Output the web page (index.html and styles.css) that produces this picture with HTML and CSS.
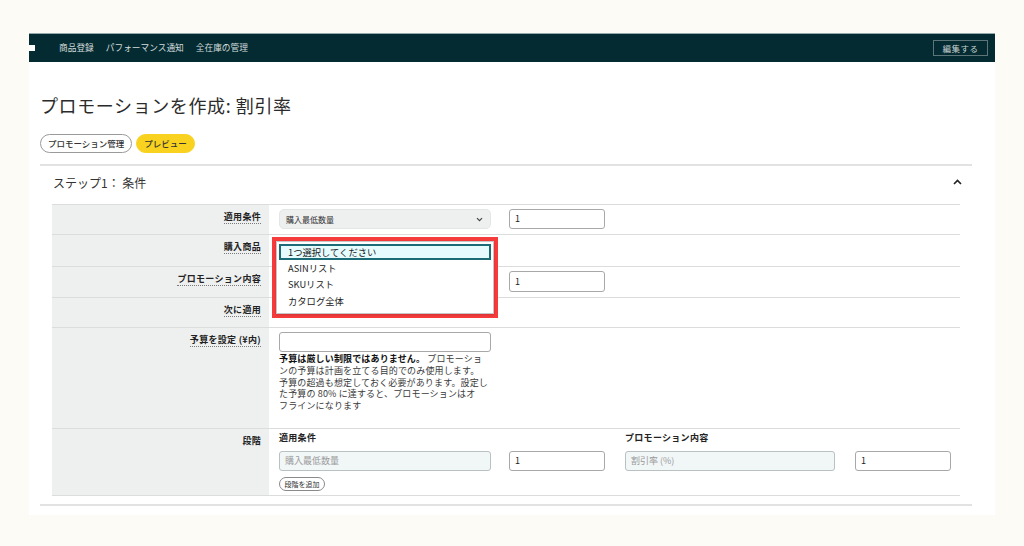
FILE: index.html
```html
<!DOCTYPE html>
<html lang="ja">
<head>
<meta charset="utf-8">
<title>プロモーションを作成: 割引率</title>
<link rel="stylesheet" href="styles.css">
</head>
<body>
<div class="page">
  <nav class="topnav">
    <span class="nav-mark"></span>
    <span class="nav-item">商品登録</span>
    <span class="nav-item">パフォーマンス通知</span>
    <span class="nav-item">全在庫の管理</span>
    <span class="nav-btn">編集する</span>
  </nav>
  <main class="content">
    <h1 class="title">プロモーションを作成: 割引率</h1>
    <div class="pills">
      <span class="pill">プロモーション管理</span>
      <span class="pill pill-yellow">プレビュー</span>
    </div>
    <section class="step">
      <div class="step-head">
        <span>ステップ1： 条件</span>
        <svg class="chev-up" width="9" height="6" viewBox="0 0 9 6"><path d="M1 5 L4.5 1.5 L8 5" fill="none" stroke="#222" stroke-width="1.6"/></svg>
      </div>
      <div class="table">
        <div class="row r1">
          <div class="label"><span>適用条件</span></div>
          <div class="value">
            <div class="select"><span>購入最低数量</span><svg width="7" height="5" viewBox="0 0 7 5"><path d="M1 1.2 L3.5 3.7 L6 1.2" fill="none" stroke="#444" stroke-width="1.2"/></svg></div>
            <div class="input">1</div>
          </div>
        </div>
        <div class="row r2">
          <div class="label"><span>購入商品</span></div>
          <div class="value"></div>
        </div>
        <div class="row r3">
          <div class="label"><span>プロモーション内容</span></div>
          <div class="value">
            <div class="blank"></div>
            <div class="input tall">1</div>
          </div>
        </div>
        <div class="row r4">
          <div class="label"><span>次に適用</span></div>
          <div class="value"></div>
        </div>
        <div class="row r5">
          <div class="label"><span>予算を設定 (¥内)</span></div>
          <div class="value column">
            <div class="input wide"></div>
            <p class="help"><b>予算は厳しい制限ではありません。</b> プロモーショ<br>ンの予算は計画を立てる目的でのみ使用します。<br>予算の超過も想定しておく必要があります。設定し<br>た予算の 80% に達すると、プロモーションはオ<br>フラインになります</p>
          </div>
        </div>
        <div class="row r6">
          <div class="label"><span class="plain">段階</span></div>
          <div class="value tiers">
            <div class="tier-head">適用条件</div>
            <div class="tier-head"></div>
            <div class="tier-head">プロモーション内容</div>
            <div class="tier-head"></div>
            <div class="input wide ph">購入最低数量</div>
            <div class="input">1</div>
            <div class="input wide2 ph">割引率 (%)</div>
            <div class="input">1</div>
            <div class="add-btn">段階を追加</div>
          </div>
        </div>
        <div class="popup">
          <div class="listbox">
            <div class="opt selected">1つ選択してください</div>
            <div class="opt">ASINリスト</div>
            <div class="opt">SKUリスト</div>
            <div class="opt">カタログ全体</div>
          </div>
        </div>
      </div>
    </section>
  </main>
</div>
</body>
</html>
```
FILE: styles.css
```css
* { box-sizing: border-box; margin: 0; padding: 0; }
body {
  background: #fdfbf5;
  font-family: "Noto Sans CJK JP", "Noto Sans", sans-serif;
  color: #333;
}
.page {
  margin: 33px 0 0 29px;
  width: 966px;
  height: 482px;
  background: #fff;
}
.topnav {
  height: 29px;
  background: #032b31;
  border-top: 1px solid #93a9ac;
  display: flex;
  align-items: center;
  color: #d3dcdc;
  font-size: 8.7px;
}
.nav-mark {
  width: 6px;
  height: 6px;
  background: #fff;
  margin-right: 24px;
}
.nav-item { margin-right: 12px; line-height: 12px; }
.nav-btn {
  margin-left: auto;
  margin-right: 7px;
  height: 16px;
  width: 55px;
  border: 1px solid #5d7478;
  font-size: 8.5px;
  line-height: 14px;
  text-align: center;
  letter-spacing: 0.5px;
  color: #c9d3d3;
}
.content { padding: 0 23px 0 11px; }
.title {
  margin-top: 31px;
  font-size: 18px;
  line-height: 24px;
  font-weight: 400;
  letter-spacing: 0.6px;
  color: #2b2b2b;
}
.pills {
  margin-top: 17px;
  display: flex;
  gap: 4px;
}
.pill {
  height: 19px;
  padding: 0 7px;
  border: 1px solid #9a9a9a;
  border-radius: 10px;
  font-size: 8.5px;
  line-height: 17px;
  color: #333;
  font-weight: 500;
}
.pill-yellow {
  background: #f8d21e;
  border-color: #f8d21e;
  padding: 0 7px;
}
.step {
  margin-top: 11px;
  border-top: 2px solid #e2e2e2;
  border-bottom: 2px solid #e2e2e2;
  padding-bottom: 8px;
}
.step-head {
  height: 32px;
  display: flex;
  align-items: center;
  justify-content: space-between;
  padding: 0 10px 0 13px;
  font-size: 12px;
  color: #333;
}
.chev-up { display: block; }
.table {
  margin: 6px 12px 0;
  position: relative;
  border-bottom: 1px solid #dcdcdc;
}
.row {
  display: grid;
  grid-template-columns: 217px 1fr;
  border-top: 1px solid #dcdcdc;
}
.r1 { height: 30px; }
.r2 { height: 32px; }
.r3 { height: 31px; }
.r4 { height: 30px; }
.r5 { height: 101px; }
.r6 { height: 67px; }
.label {
  background: #eef0f0;
  text-align: right;
  padding: 5px 8px 0 0;
  font-size: 9px;
  line-height: 14px;
  font-weight: 700;
  letter-spacing: 0.3px;
  color: #222;
}
.label span { border-bottom: 1px dotted #7a7a7a; }
.label span.plain { border-bottom: none; }
.value {
  padding: 4px 0 0 10px;
  display: flex;
  gap: 18px;
  align-items: flex-start;
}
.value.column { flex-direction: column; gap: 0; }
.select {
  width: 212px;
  height: 20px;
  background: #eef0f0;
  border: 1px solid #e3e6e6;
  border-radius: 5px;
  font-size: 8px;
  padding: 0 7px 0 6px;
  display: flex;
  align-items: center;
  justify-content: space-between;
  color: #333;
}
.blank { width: 212px; height: 20px; }
.input {
  width: 96px;
  height: 20px;
  border: 1px solid #a8a8a8;
  border-radius: 3px;
  font-size: 9px;
  line-height: 18px;
  padding-left: 5px;
  background: #fff;
  color: #222;
}
.input.tall { height: 21px; line-height: 19px; }
.input.wide { width: 212px; }
.input.wide2 { width: 210px; }
.input.ph {
  background: #f1f6f7;
  border-color: #b9c1c2;
  color: #9a9a9a;
}
.help {
  margin-top: 1px;
  font-size: 9px;
  line-height: 11.8px;
  letter-spacing: 0.15px;
  color: #3a3a3a;
  white-space: nowrap;
}
.help b { color: #111; }
.value.tiers {
  display: grid;
  grid-template-columns: 230px 116px 230px 96px;
  grid-template-rows: 12px 20px 14px;
  gap: 0;
  padding-top: 3px;
  align-items: start;
}
.tier-head {
  font-size: 9px;
  line-height: 12px;
  font-weight: 700;
  letter-spacing: 0.3px;
  color: #222;
}
.tiers .input { margin-top: 7px; }
.add-btn {
  margin-top: 13px;
  width: 46px;
  height: 14px;
  border: 1px solid #8a8a8a;
  border-radius: 8px;
  font-size: 7px;
  line-height: 12px;
  text-align: center;
  color: #333;
}
.popup {
  position: absolute;
  left: 220px;
  top: 33px;
  width: 226px;
  height: 81px;
  border: 4px solid #f53b3b;
  background: #fff;
}
.listbox {
  height: 100%;
  border: 1px solid #c6c6c6;
  padding: 2px;
  box-shadow: 0 1px 2px rgba(0,0,0,0.15);
}
.opt {
  height: 16.4px;
  font-size: 9.3px;
  line-height: 16.4px;
  padding-left: 9px;
  color: #222;
}
.opt.selected {
  height: 16px;
  border: 2px solid #1c6c78;
  background: #e6fbfd;
  line-height: 12px;
  padding-left: 7px;
}
```
